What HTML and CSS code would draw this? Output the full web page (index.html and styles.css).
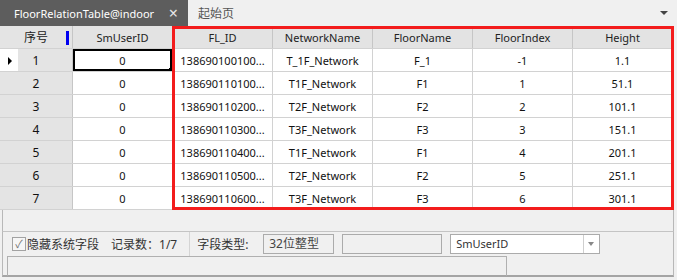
FILE: index.html
```html
<!DOCTYPE html>
<html lang="zh-CN">
<head>
    <meta charset="UTF-8">
    <title>FloorRelationTable@indoor</title>
    <link rel="stylesheet" href="styles.css">
</head>
<body>
    <div class="tabs">
        <div class="tab active">FloorRelationTable@indoor <span class="close">×</span></div>
        <div class="tab">起始页</div>
        <div class="tab-menu"></div>
    </div>

    <div class="view">
        <table class="grid">
            <thead>
                <tr>
                    <th class="rowhead">序号<span class="sort-mark"></span></th>
                    <th>SmUserID</th>
                    <th>FL_ID</th>
                    <th>NetworkName</th>
                    <th>FloorName</th>
                    <th>FloorIndex</th>
                    <th>Height</th>
                </tr>
            </thead>
            <tbody>
                <tr>
                    <td class="rowhead current-row"><span class="marker"></span>1</td>
                    <td class="current-cell">0</td>
                    <td>138690100100...</td>
                    <td>T_1F_Network</td>
                    <td>F_1</td>
                    <td>-1</td>
                    <td>1.1</td>
                </tr>
                <tr>
                    <td class="rowhead">2</td>
                    <td>0</td>
                    <td>138690110100...</td>
                    <td>T1F_Network</td>
                    <td>F1</td>
                    <td>1</td>
                    <td>51.1</td>
                </tr>
                <tr>
                    <td class="rowhead">3</td>
                    <td>0</td>
                    <td>138690110200...</td>
                    <td>T2F_Network</td>
                    <td>F2</td>
                    <td>2</td>
                    <td>101.1</td>
                </tr>
                <tr>
                    <td class="rowhead">4</td>
                    <td>0</td>
                    <td>138690110300...</td>
                    <td>T3F_Network</td>
                    <td>F3</td>
                    <td>3</td>
                    <td>151.1</td>
                </tr>
                <tr>
                    <td class="rowhead">5</td>
                    <td>0</td>
                    <td>138690110400...</td>
                    <td>T1F_Network</td>
                    <td>F1</td>
                    <td>4</td>
                    <td>201.1</td>
                </tr>
                <tr>
                    <td class="rowhead">6</td>
                    <td>0</td>
                    <td>138690110500...</td>
                    <td>T2F_Network</td>
                    <td>F2</td>
                    <td>5</td>
                    <td>251.1</td>
                </tr>
                <tr>
                    <td class="rowhead">7</td>
                    <td>0</td>
                    <td>138690110600...</td>
                    <td>T3F_Network</td>
                    <td>F3</td>
                    <td>6</td>
                    <td>301.1</td>
                </tr>
            </tbody>
        </table>

        <div class="grid-empty"></div>

        <div class="status">
            <label class="check"><span class="box">&#10003;</span>隐藏系统字段</label>
            <span class="count">记录数：1/7</span>
            <span class="sep"></span>
            <span class="field-label">字段类型:</span>
            <span class="field type">32位整型</span>
            <span class="field blank"></span>
            <span class="combo"><span class="combo-text">SmUserID</span><span class="combo-btn"></span></span>
        </div>

        <div class="bottom">
            <div class="bottom-box"></div>
        </div>

        <!-- highlight over the selected columns -->
        <div class="highlight"></div>
    </div>
</body>
</html>
```

FILE: styles.css
```css
body {
    margin: 0;
    width: 677px;
    height: 280px;
    overflow: hidden;
    background-color: #f0f0f0;
    font-family: "Noto Sans", "Noto Sans CJK SC", sans-serif;
    font-size: 11px;
    color: #222;
}

/* Tabs */
.tabs {
    display: flex;
    align-items: stretch;
    height: 26px;
}

.tab {
    display: flex;
    align-items: center;
    padding: 0 10px;
    color: #555;
    font-size: 12px;
}

.tab.active {
    width: 188px;
    box-sizing: border-box;
    padding-left: 14px;
    padding-right: 10px;
    background-color: #5d5d5d;
    color: #fff;
    font-size: 11px;
}

.close {
    margin-left: auto;
    font-size: 16px;
    color: #e8e8e8;
}

.tab-menu {
    margin-left: auto;
    margin-right: 9px;
    align-self: center;
    width: 0;
    height: 0;
    border-left: 4px solid transparent;
    border-right: 4px solid transparent;
    border-top: 4px solid #444;
}

/* Grid */
.view {
    position: relative;
}

.grid {
    border-collapse: collapse;
    table-layout: fixed;
    width: 673px;
}

.grid th,
.grid td {
    height: 22px;
    padding: 0 4px;
    text-align: center;
    white-space: nowrap;
    overflow: hidden;
    font-weight: normal;
    border-right: 1px solid #d2d2d2;
    border-bottom: 1px solid #d2d2d2;
}

.grid th {
    background-color: #e3e3e3;
    border-right-color: #c6c6c6;
    color: #222;
}

.grid td {
    background-color: #fff;
    color: #111;
}

.grid th:first-child,
.grid td:first-child {
    width: 64px;
}

.grid th:nth-child(n+2) {
    width: 91px;
}

.grid .rowhead {
    background-color: #e4e4e4;
    border-right-color: #c6c6c6;
    position: relative;
    font-size: 12px;
}

.sort-mark {
    position: absolute;
    left: 66px;
    top: 5px;
    width: 3px;
    height: 14px;
    background-color: #0000f0;
}

.grid .current-row {
    background: linear-gradient(to right, #fff 18px, #e4e4e4 18px);
}

.marker {
    position: absolute;
    left: 8px;
    top: 8px;
    width: 0;
    height: 0;
    border-top: 4px solid transparent;
    border-bottom: 4px solid transparent;
    border-left: 4px solid #000;
}

.current-cell {
    position: relative;
    box-shadow: inset 0 0 0 2px #000;
}

.current-cell::after {
    content: "";
    position: absolute;
    right: -1px;
    bottom: -1px;
    width: 4px;
    height: 4px;
    background-color: #000;
}

.grid-empty {
    height: 21px;
    margin: 0 3px 0 2px;
    border-left: 1px solid #b8b8b8;
    border-right: 1px solid #b8b8b8;
}

/* Status bar */
.status {
    display: flex;
    align-items: center;
    height: 24px;
    margin: 0 3px 0 2px;
    border: 1px solid #b8b8b8;
    border-bottom: none;
    border-top-color: #c4c4c4;
    color: #333;
    font-size: 12px;
}

.check {
    display: flex;
    align-items: center;
    margin-left: 9px;
}

.box {
    width: 12px;
    height: 12px;
    margin-right: 1px;
    border: 1px solid #a2a2a2;
    background-color: #f6f6f6;
    color: #777;
    font-size: 11px;
    line-height: 12px;
    text-align: center;
}

.count {
    margin-left: 12px;
}

.sep {
    align-self: stretch;
    width: 1px;
    margin-left: 12px;
    background-color: #d4d4d4;
}

.field-label {
    margin-left: 7px;
    width: 66px;
}

.field {
    box-sizing: border-box;
    height: 20px;
    border: 1px solid #ababab;
    padding-left: 5px;
    line-height: 18px;
    color: #444;
}

.type {
    width: 71px;
}

.blank {
    width: 100px;
    margin-left: 8px;
}

.combo {
    display: flex;
    box-sizing: border-box;
    width: 150px;
    height: 20px;
    margin-left: 8px;
    border: 1px solid #ababab;
    background-color: #fff;
}

.combo-text {
    flex: 1;
    padding-left: 5px;
    line-height: 18px;
    color: #333;
    font-size: 11px;
}

.combo-btn {
    width: 15px;
    border-left: 1px solid #cfcfcf;
    position: relative;
}

.combo-btn::after {
    content: "";
    position: absolute;
    left: 4px;
    top: 7px;
    border-left: 3px solid transparent;
    border-right: 3px solid transparent;
    border-top: 4px solid #888;
}

.bottom {
    height: 21px;
    margin: 0 3px 0 2px;
    padding-left: 4px;
    border: 1px solid #b8b8b8;
    border-top: none;
    border-bottom: 2px solid #a4a4a4;
    box-sizing: border-box;
}

.bottom-box {
    width: 500px;
    height: 20px;
    box-sizing: border-box;
    border: 1px solid #b0b0b0;
    border-bottom: none;
}

.highlight {
    position: absolute;
    left: 172px;
    top: 0;
    width: 502px;
    height: 184px;
    box-sizing: border-box;
    border: 3px solid #f31c1c;
    pointer-events: none;
}
```
